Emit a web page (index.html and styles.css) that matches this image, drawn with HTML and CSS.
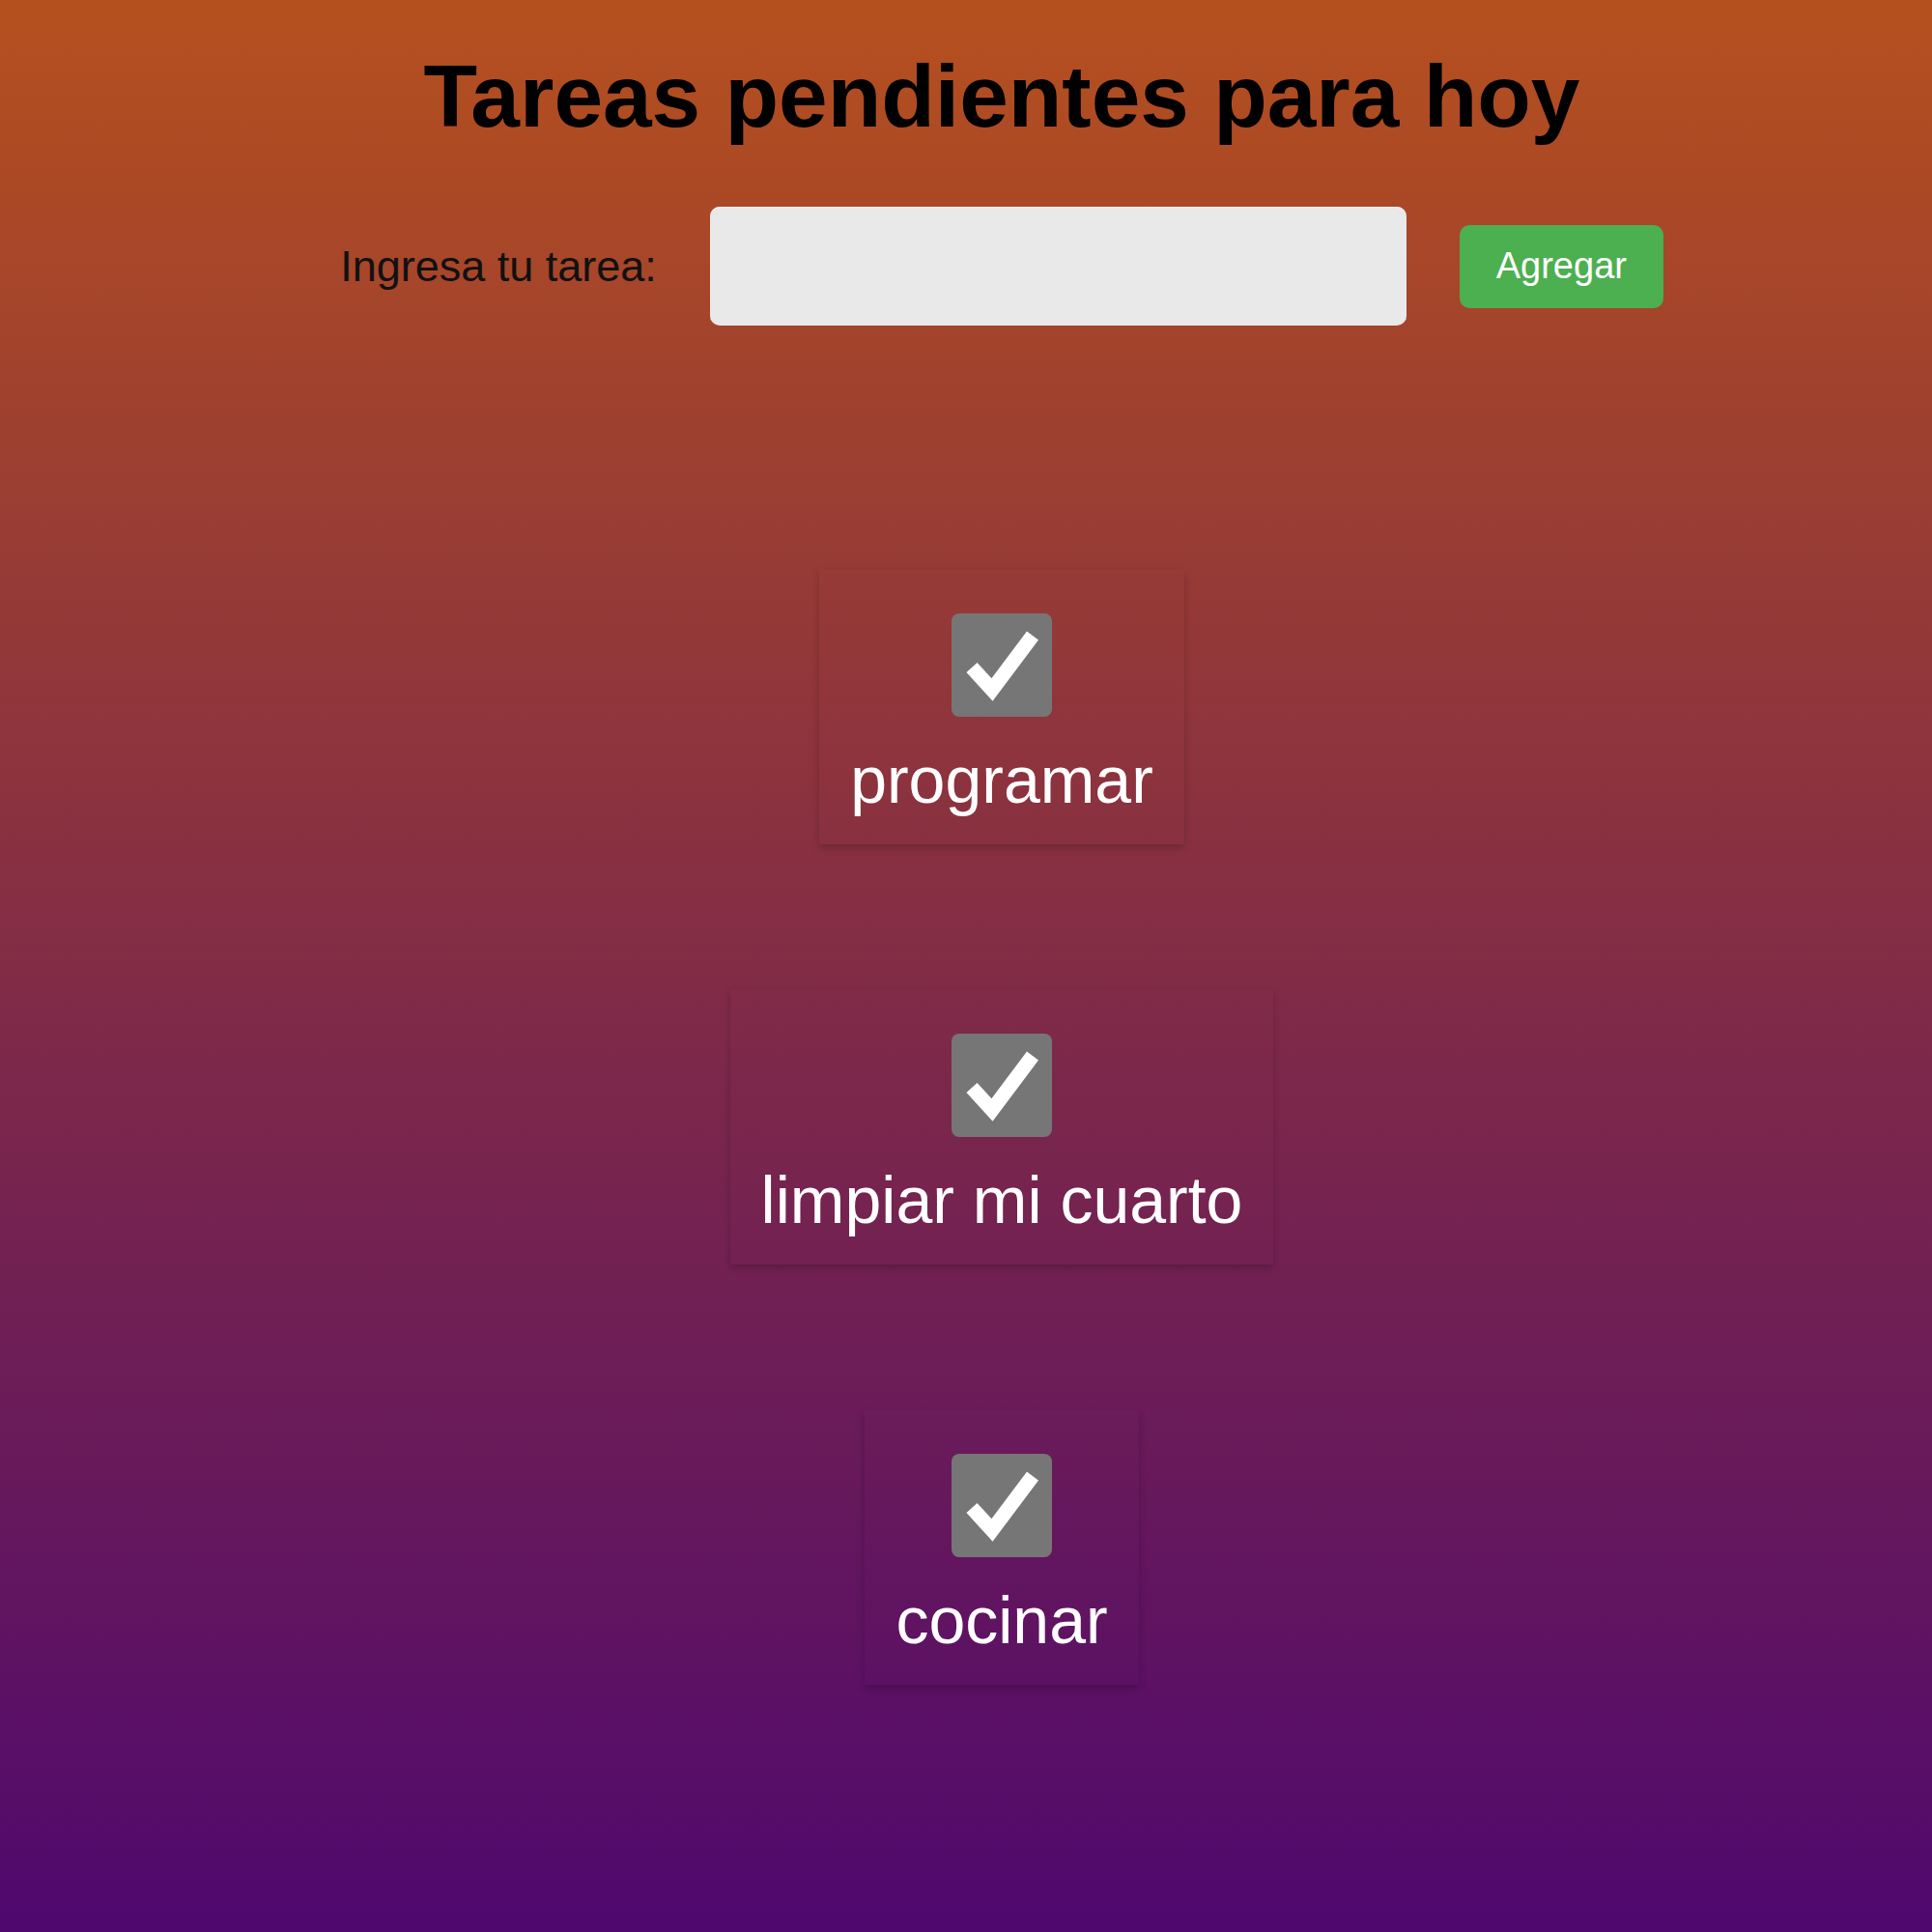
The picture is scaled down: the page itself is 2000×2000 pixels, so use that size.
FILE: index.html
```html
<!DOCTYPE html>
<html lang="es">
<head>
<meta charset="utf-8">
<title>Tareas pendientes para hoy</title>
<link rel="stylesheet" href="styles.css">
</head>
<body>
<main class="page">
  <h1 class="title">Tareas pendientes para hoy</h1>
  <form class="add-row">
    <label class="add-label" for="task">Ingresa tu tarea:</label>
    <input class="add-input" id="task" type="text">
    <button class="add-btn" type="button">Agregar</button>
  </form>
  <ul class="tasks">
    <li class="task">
      <span class="check"><svg viewBox="0 0 104 107" width="104" height="107"><polyline points="21,56 42,79 84,23" fill="none" stroke="#fff" stroke-width="15"/></svg></span>
      <span class="task-text">programar</span>
    </li>
    <li class="task">
      <span class="check"><svg viewBox="0 0 104 107" width="104" height="107"><polyline points="21,56 42,79 84,23" fill="none" stroke="#fff" stroke-width="15"/></svg></span>
      <span class="task-text">limpiar mi cuarto</span>
    </li>
    <li class="task">
      <span class="check"><svg viewBox="0 0 104 107" width="104" height="107"><polyline points="21,56 42,79 84,23" fill="none" stroke="#fff" stroke-width="15"/></svg></span>
      <span class="task-text">cocinar</span>
    </li>
  </ul>
</main>
</body>
</html>
```
FILE: styles.css
```css
html, body {
  margin: 0;
  padding: 0;
}
body {
  min-height: 2000px;
  background: linear-gradient(to bottom, #b5501e 0%, #4f086e 100%);
  font-family: "Liberation Sans", Arial, sans-serif;
}
.page {
  padding-left: 74px;
  display: flex;
  flex-direction: column;
  align-items: center;
}
.title {
  margin: 48px 0 0;
  font-size: 91px;
  line-height: 104px;
  font-weight: bold;
  color: #000;
}
.add-row {
  margin: 62px 0 0;
  display: flex;
  align-items: center;
  gap: 55px;
}
.add-label {
  font-size: 45px;
  color: #111;
}
.add-input {
  width: 721px;
  height: 123px;
  box-sizing: border-box;
  border: none;
  border-radius: 10px;
  background: #e9e9e9;
  box-shadow: inset 0 1px 0 #f6f6f6;
}
.add-btn {
  width: 211px;
  height: 86px;
  border: none;
  border-radius: 10px;
  background: #4caf50;
  color: #fff;
  font-family: "Liberation Sans", Arial, sans-serif;
  font-size: 38px;
  padding: 0;
}
.tasks {
  list-style: none;
  margin: 252px 0 0;
  padding: 0;
  display: flex;
  flex-direction: column;
  align-items: center;
  gap: 150px;
}
.task {
  display: flex;
  flex-direction: column;
  align-items: center;
  padding: 46px 32px 28px;
  box-shadow: 0 4px 8px rgba(0, 0, 0, 0.2);
}
.check {
  width: 104px;
  height: 107px;
  border-radius: 8px;
  background: #767676;
  display: block;
}
.check svg {
  display: block;
}
.task-text {
  margin-top: 27px;
  font-size: 68px;
  line-height: 77px;
  color: #fff;
}
```
